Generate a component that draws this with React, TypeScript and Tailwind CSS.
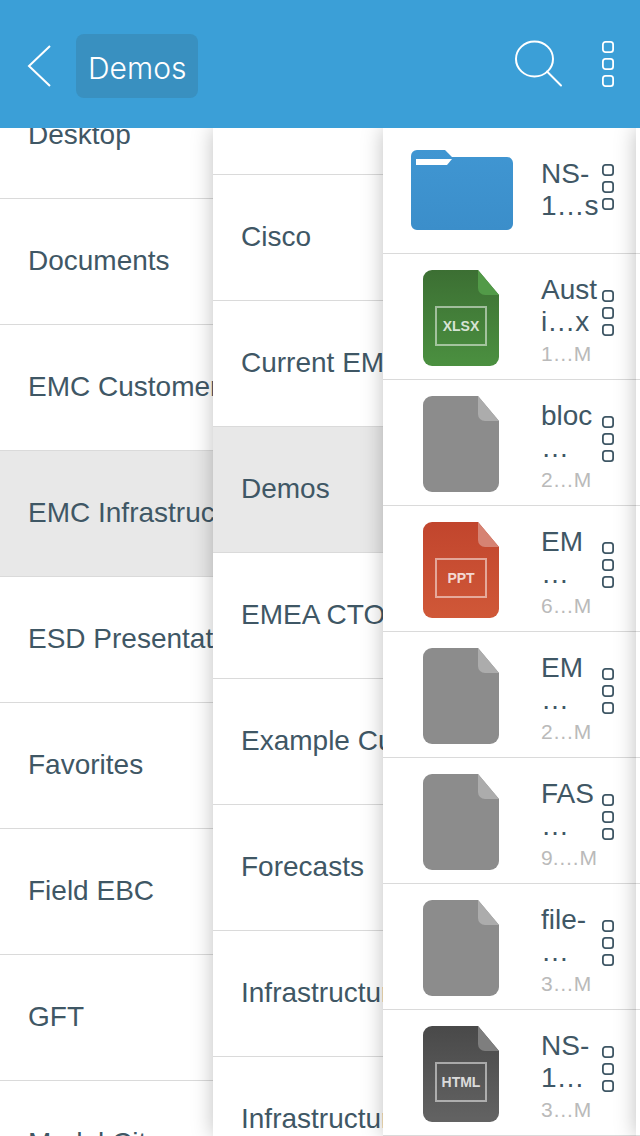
import React from "react";

type Kind = "folder" | "xlsx" | "ppt" | "html" | "file";

interface Entry {
  id: number;
  kind: Kind;
  name: [string, string];
  size?: string;
}

const rootFolders = ["Desktop", "Documents", "EMC Customer", "EMC Infrastructure", "ESD Presentations", "Favorites", "Field EBC", "GFT", "Model City"];

const subFolders = ["", "Cisco", "Current EMC", "Demos", "EMEA CTO", "Example Customer", "Forecasts", "Infrastructure", "Infrastructure"];

const entries: Entry[] = [
  { id: 1, kind: "folder", name: ["NS-", "1…s"] },
  { id: 2, kind: "xlsx", name: ["Aust", "i…x"], size: "1…M" },
  { id: 3, kind: "file", name: ["bloc", "…"], size: "2…M" },
  { id: 4, kind: "ppt", name: ["EM", "…"], size: "6…M" },
  { id: 5, kind: "file", name: ["EM", "…"], size: "2…M" },
  { id: 6, kind: "file", name: ["FAS", "…"], size: "9.…M" },
  { id: 7, kind: "file", name: ["file-", "…"], size: "3…M" },
  { id: 8, kind: "html", name: ["NS-", "1…"], size: "3…M" },
];

const palette: Record<Exclude<Kind, "folder">, { from: string; to: string; fold: string; label?: string }> = {
  xlsx: { from: "#3c6f33", to: "#4b9040", fold: "#529a48", label: "XLSX" },
  ppt: { from: "#c1452d", to: "#d05838", fold: "#d68373", label: "PPT" },
  html: { from: "#494949", to: "#636363", fold: "#7e7e7e", label: "HTML" },
  file: { from: "#8c8c8c", to: "#8c8c8c", fold: "#acacac" },
};

function MoreIcon() {
  return (
    <svg width="12" height="46" viewBox="0 0 12 46" fill="none" stroke="currentColor" strokeWidth="1.8" aria-hidden="true">
      <rect x="0.9" y="0.9" width="10.2" height="10.2" rx="2.6" />
      <rect x="0.9" y="17.9" width="10.2" height="10.2" rx="2.6" />
      <rect x="0.9" y="34.9" width="10.2" height="10.2" rx="2.6" />
    </svg>
  );
}

function FolderIcon() {
  return (
    <svg className="mt-[22px] shrink-0" width="102" height="80" viewBox="0 0 102 80" aria-hidden="true">
      <defs>
        <linearGradient id="folder" x1="0" y1="0" x2="0" y2="1">
          <stop offset="0" stopColor="#4096d2" />
          <stop offset="1" stopColor="#3b8eca" />
        </linearGradient>
      </defs>
      <path d="M6 0H34L41 7H96A6 6 0 0 1 102 13V74A6 6 0 0 1 96 80H6A6 6 0 0 1 0 74V6A6 6 0 0 1 6 0Z" fill="url(#folder)" />
      <path d="M5 9H41L36 15H5Z" fill="#fff" />
    </svg>
  );
}

function FileIcon({ kind, id }: { kind: Exclude<Kind, "folder">; id: number }) {
  const { from, to, fold, label } = palette[kind];
  const gradient = `sheet-${id}`;
  return (
    <svg className="mx-[12px] mt-4 shrink-0" width="78" height="96" viewBox="0 0 78 96" aria-hidden="true">
      <defs>
        <linearGradient id={gradient} x1="0" y1="0" x2="0" y2="1">
          <stop offset="0" stopColor={from} />
          <stop offset="1" stopColor={to} />
        </linearGradient>
      </defs>
      <path d="M9 0H55L76 25V87A9 9 0 0 1 67 96H9A9 9 0 0 1 0 87V9A9 9 0 0 1 9 0Z" fill={`url(#${gradient})`} />
      <path d="M55 0L76 25H62A7 7 0 0 1 55 18Z" fill={fold} />
      {label && (
        <>
          <rect x="13" y="37" width="50" height="38" fill="none" stroke="#fff" strokeOpacity="0.5" strokeWidth="2" />
          <text x="38" y="61" textAnchor="middle" fill="#fff" fillOpacity="0.8" className="text-[14px] font-bold">
            {label}
          </text>
        </>
      )}
    </svg>
  );
}

function FolderColumn({ label, items, selected, shift }: { label: string; items: string[]; selected: string; shift: string }) {
  return (
    <nav aria-label={label} className="relative min-w-0 overflow-hidden bg-white shadow-[0_0_20px_rgba(0,0,0,0.25)]">
      <ul className={shift}>
        {items.map((item, i) => (
          <li key={i} className={`h-[126px] border-b border-[#dadada] ${item === selected ? "bg-[#e8e8e8]" : "bg-white"}`}>
            {item && (
              <a href={`#${label}-${i}`} className="flex h-full items-center pb-0.5 pl-7 text-[28px] leading-8 whitespace-nowrap">
                {item}
              </a>
            )}
          </li>
        ))}
      </ul>
    </nav>
  );
}

export default function App() {
  return (
    <div className="flex h-screen flex-col overflow-hidden bg-white font-['Liberation_Sans',Arial,sans-serif] text-[#3f5765]">
      <header className="relative z-10 flex h-32 shrink-0 items-center bg-[#3b9fd7] pt-1 pr-[26px] pl-[27px] text-white">
        <button aria-label="Back" className="mr-[25px]">
          <svg width="24" height="42" viewBox="0 0 24 42" fill="none" stroke="currentColor" strokeWidth="2" aria-hidden="true">
            <path d="M23 1L2 21L23 41" />
          </svg>
        </button>
        <button className="h-16 rounded-lg bg-[#3990c0] px-3 pt-1 font-['Inter',sans-serif] text-[30px] font-light">Demos</button>
        <div className="flex-1" />
        <button aria-label="Search" className="mr-[38px] pb-1">
          <svg width="50" height="48" viewBox="0 0 50 48" fill="none" stroke="currentColor" strokeWidth="2" aria-hidden="true">
            <ellipse cx="20.5" cy="19" rx="18.5" ry="17.5" />
            <path d="M33 31.5L47 45.5" strokeLinecap="round" />
          </svg>
        </button>
        <button aria-label="More options" className="pb-1">
          <MoreIcon />
        </button>
      </header>

      <main className="grid min-h-0 flex-1 grid-cols-[213fr_170fr_253fr_4fr]">
        <FolderColumn label="Folders" items={rootFolders} selected="EMC Infrastructure" shift="-mt-[55px]" />
        <FolderColumn label="Subfolders" items={subFolders} selected="Demos" shift="-mt-[79px]" />

        <section aria-label="Demos" className="relative min-w-0 overflow-hidden bg-white shadow-[0_0_20px_rgba(0,0,0,0.25)]">
          <ul>
            {entries.map((entry) => (
              <li key={entry.id} className="flex h-[126px] items-start border-b border-[#dadada] pr-[22px] pl-7">
                <a href={`#entry-${entry.id}`} className="flex min-w-0 flex-1 items-start">
                  {entry.kind === "folder" ? <FolderIcon /> : <FileIcon kind={entry.kind} id={entry.id} />}
                  <span className={`ml-7 flex flex-col text-[28px] leading-8 whitespace-nowrap ${entry.size ? "pt-5" : "pt-[30px]"}`}>
                    <span>{entry.name[0]}</span>
                    <span>{entry.name[1]}</span>
                    {entry.size && <span className="text-[21px] text-[#bababa]">{entry.size}</span>}
                  </span>
                </a>
                <button aria-label={`Options for ${entry.name.join("")}`} className="mt-9">
                  <MoreIcon />
                </button>
              </li>
            ))}
          </ul>
        </section>
        <div aria-hidden="true" className="relative min-w-0">
          <div className="h-full w-24 bg-white shadow-[0_0_20px_rgba(0,0,0,0.25)]">
            {entries.map((entry) => (
              <div key={entry.id} className="h-[126px] border-b border-[#dadada]" />
            ))}
          </div>
        </div>
      </main>
    </div>
  );
}
